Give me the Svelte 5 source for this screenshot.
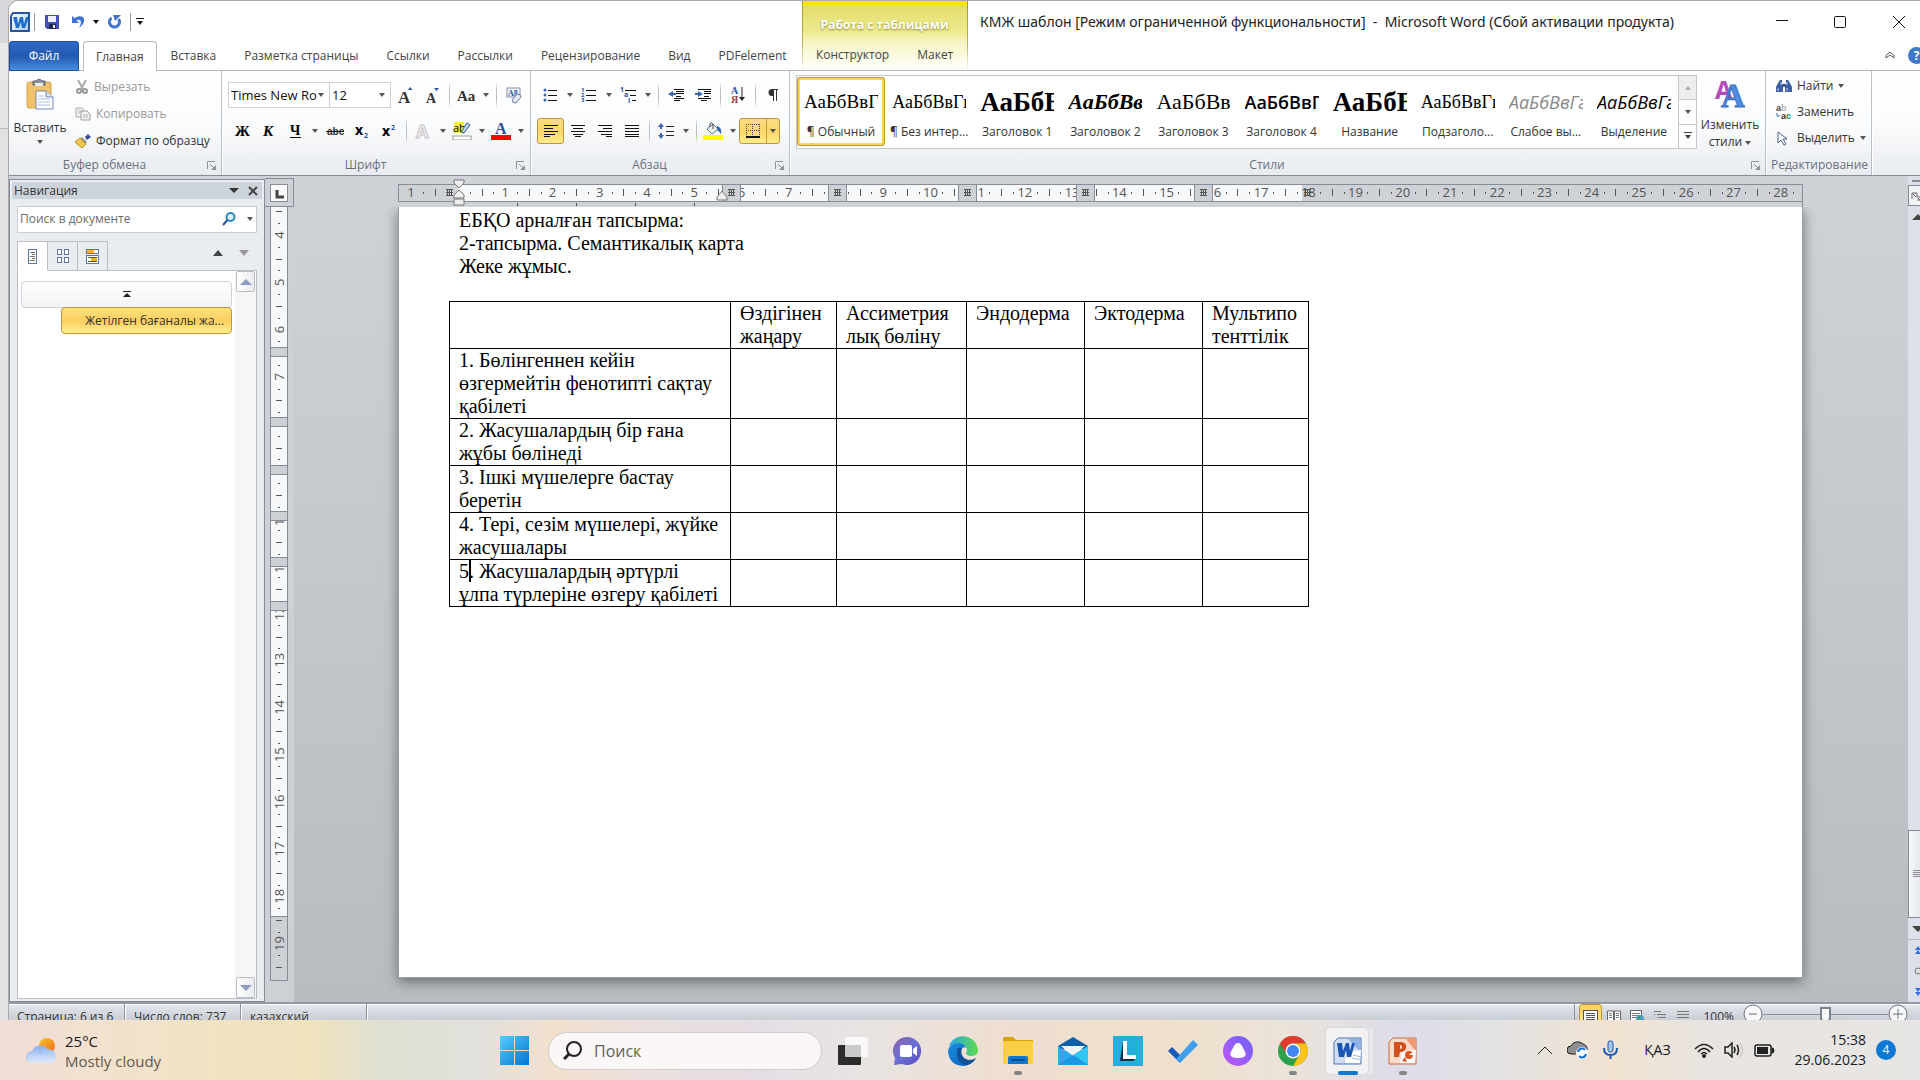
<script>
  let fontName = $state("Times New Ro");
  let fontSize = $state("12");
  let zoom = $state(50);
  let navQuery = $state("");
  let taskQuery = $state("");
  let activeTab = $state("Главная");
  let activeStyle = $state("¶ Обычный");

  const tabs = ["Главная", "Вставка", "Разметка страницы", "Ссылки", "Рассылки", "Рецензирование", "Вид", "PDFelement"];

  const styles = [
    { name: "¶ Обычный", sample: "АаБбВвГг", look: "times" },
    { name: "¶ Без интер...", sample: "АаБбВвГгД", look: "cambria" },
    { name: "Заголовок 1", sample: "АаБбВ", look: "large" },
    { name: "Заголовок 2", sample: "АаБбВвГ", look: "bold-italic" },
    { name: "Заголовок 3", sample: "АаБбВвГ", look: "semi" },
    { name: "Заголовок 4", sample: "АаБбВвГ", look: "sans-bold" },
    { name: "Название", sample: "АаБбВ", look: "large" },
    { name: "Подзаголо...", sample: "АаБбВвГг", look: "cambria" },
    { name: "Слабое вы...", sample: "АаБбВвГг", look: "faint" },
    { name: "Выделение", sample: "АаБбВвГг", look: "sans-italic" }
  ];

  const columns = ["", "Өздігінен жаңару", "Ассиметрия лық бөліну", "Эндодерма", "Эктодерма", "Мультипо тенттілік"];
  const rows = [
    "1. Бөлінгеннен кейін өзгермейтін фенотипті сақтау қабілеті",
    "2. Жасушалардың бір ғана жұбы бөлінеді",
    "3. Ішкі мүшелерге бастау беретін",
    "4. Тері, сезім мүшелері, жүйке жасушалары"
  ];

  // one centimetre at 120 dpi
  const CM = 47.24;

  function marks(from, to, origin) {
    let out = [];
    for (let n = from; n <= to; n++) {
      let at = origin + n * CM;
      out.push({ kind: "num", n, at });
      out.push({ kind: "dot", at: at + CM * 0.25 });
      out.push({ kind: "tick", at: at + CM * 0.5 });
      out.push({ kind: "dot", at: at + CM * 0.75 });
    }
    return out;
  }

  const hMarks = [
    { kind: "num", n: 1, at: 13 },
    { kind: "dot", at: 25 }, { kind: "tick", at: 37 },
    ...marks(0, 28, 60).filter((m) => m.at > 61 && m.at < 1402)
  ];
  const hStops = [324, 430, 560, 678, 796];
  const vMarks = marks(3, 19, 28 - 4 * CM).filter((m) => m.at > 2 && m.at < 770);
  const vStops = [140, 210, 258, 304, 350, 394];

  const apps = [
    { icon: "taskview", title: "Представление задач" },
    { icon: "chat", title: "Чат" },
    { icon: "edge", title: "Edge" },
    { icon: "folder", title: "Проводник", state: "open" },
    { icon: "mail", title: "Почта" },
    { icon: "letter", title: "L" },
    { icon: "todo", title: "To Do" },
    { icon: "alice", title: "Алиса" },
    { icon: "chrome", title: "Chrome", state: "open" },
    { icon: "wordapp", title: "Word", state: "active" },
    { icon: "pptapp", title: "PowerPoint", state: "open" }
  ];

  function lines(list, color = "#111") {
    return list.map(([x, y, w]) => `<rect x="${x}" y="${y}" width="${w}" height="2" fill="${color}"/>`).join("");
  }

  function glyph(text, x, y, size, extra = "") {
    return `<text x="${x}" y="${y}" font-size="${size}" font-family="Liberation Serif, serif" font-weight="700" ${extra}>${text}</text>`;
  }

  const icons = {
    word: [20, 20, `<defs><linearGradient id="wg" x2="1" y2="1"><stop stop-color="#fff"/><stop offset="1" stop-color="#a9cbee"/></linearGradient></defs><path d="M3 1H19V19H1V4Z" fill="url(#wg)" stroke="#2a5699" stroke-width="2"/><path d="M3 5H7L8 12 10 5H13L14 12 16 5H19L15 16H12L10.500 10 9 16H6Z" fill="#1c6fd0"/>`],
    save: [14, 14, `<path d="M0 0H14V14H2L0 12Z" fill="#4450b8"/><rect x="3" y="1" width="8" height="6" fill="#eef1fb"/><rect x="4" y="9" width="7" height="5" fill="#20264f"/><rect x="8" y="10" width="2" height="3" fill="#fff"/>`],
    undo: [13, 14, `<path d="M0 1V8H7L4.500 5.500C8 3 11 6 7 13 15 7 13 0 6 1.500L2.500 3Z" fill="#3f75cf"/>`],
    redo: [13, 14, `<path d="M3.500 3A5 5 0 1 0 10.500 4" fill="none" stroke="#3f75cf" stroke-width="3"/><path d="M5 0H13L7 6Z" fill="#3f75cf"/>`],
    paste: [28, 31, `<rect x="1" y="3" width="24" height="26" rx="2" fill="#efc36b" stroke="#d6a34a"/><path d="M7 2H10Q13 -2 16 2H19V6H7Z" fill="#8d9299" stroke="#5d6269"/><rect x="9" y="4" width="8" height="3" fill="#e7e9ec"/><path d="M10 12H20L27 18V30H10Z" fill="#fff" stroke="#6f87b3"/><path d="M20 12V18H27" fill="#dbe5f5" stroke="#6f87b3"/><path d="M12 17H18M12 20H24M12 23H24M12 26H24" stroke="#a9bddb"/>`],
    cut: [14, 14, `<path d="M3 0 8 9M11 0 6 9" stroke="#a8a8a8" stroke-width="2"/><circle cx="4" cy="11" r="2" fill="none" stroke="#999" stroke-width="2"/><circle cx="10" cy="11" r="2" fill="none" stroke="#999" stroke-width="2"/>`],
    copy: [16, 14, `<path d="M1 1H7L9 3V10H1Z" fill="#f2f2f2" stroke="#a9a9a9"/><path d="M6 4H12L15 7V13H6Z" fill="#f2f2f2" stroke="#9d9d9d"/><path d="M3 4H6M3 6H5M8 8H13M8 10H13" stroke="#b5b5b5"/>`],
    brush: [16, 14, `<path d="M10 3 13 0 16 3 12 6Z" fill="#3b4a8c"/><path d="M7 3 12 8 10 10 5 5Z" fill="#8e93a0"/><path d="M5 4 11 10 7 14Q3 11 0 8Z" fill="#efc94c" stroke="#b48a1c"/>`],
    grow: [16, 18, glyph("A", 1, 17, 17, 'fill="#333"') + `<path d="M11 4 13 1 15.500 4Z" fill="#2a50a0"/>`],
    shrink: [16, 18, glyph("A", 2, 17, 14, 'fill="#333"') + `<path d="M10 2 12.500 5 15 2Z" fill="#2a50a0"/>`],
    caseAa: [20, 16, glyph("Aa", 1, 14, 15, 'fill="#333"')],
    clear: [16, 17, `<rect x="1" y="1" width="13" height="9" fill="#f4f6fa" stroke="#8190ac"/>` + glyph("A8", 2, 9, 8, 'fill="#2a50a0"') + `<path d="M6 13 11 7Q15 7 15 10L10 16Q6 16 6 13Z" fill="#e5ecf8" stroke="#6a7aa0"/>`],
    bold: [16, 16, glyph("Ж", 1, 13, 15)],
    italic: [16, 16, glyph("К", 2, 13, 15, 'font-style="italic"')],
    under: [16, 16, glyph("Ч", 3, 12, 14) + `<path d="M3 14.500H14" stroke="#111"/>`],
    strike: [18, 16, `<text x="1" y="12" font-size="10" font-weight="700" font-family="Liberation Sans, sans-serif" fill="#333">abc</text><path d="M0 8.500H18" stroke="#111"/>`],
    sub: [16, 16, `<text x="1" y="12" font-size="14" font-weight="700" font-family="Open Sans, sans-serif">x</text><text x="10" y="15" font-size="7" font-weight="700" font-family="Open Sans, sans-serif" fill="#2a50a0">2</text>`],
    sup: [16, 16, `<text x="1" y="13" font-size="14" font-weight="700" font-family="Open Sans, sans-serif">x</text><text x="10" y="7" font-size="7" font-weight="700" font-family="Open Sans, sans-serif" fill="#2a50a0">2</text>`],
    effects: [18, 18, `<text x="2" y="16" font-size="18" font-weight="700" font-family="Open Sans, sans-serif" fill="#f3f1f4" stroke="#c5c1c8">A</text>`],
    marker: [20, 18, `<rect x="2" y="0" width="10" height="11" fill="#f4ee3c"/><text x="1" y="10" font-size="11" font-family="Open Sans, sans-serif">ab</text><path d="M9 10 15 1 18 3 12 11Z" fill="#b8d4f4" stroke="#3a5c94"/><rect x="1" y="14" width="18" height="4" fill="#fff" stroke="#999"/>`],
    color: [20, 18, glyph("A", 4, 12, 16, 'fill="#2a4f9c"') + `<rect y="13" width="20" height="5" fill="#f00"/>`],
    bullets: [14, 14, `<circle cx="2" cy="2" r="1.500" fill="#3a66b8"/><circle cx="2" cy="7" r="1.500" fill="#3a66b8"/><circle cx="2" cy="12" r="1.500" fill="#3a66b8"/><path d="M5 2.500H14M5 7.500H14M5 12.500H14" stroke="#111"/>`],
    numbers: [16, 16, `<g font-size="6" font-weight="700" font-family="Open Sans, sans-serif" fill="#2a50a0"><text y="5">1</text><text y="10">2</text><text y="15">3</text></g><path d="M5 3.500H15M5 8.500H15M5 13.500H15" stroke="#111"/>`],
    multi: [17, 16, `<g font-size="7" font-weight="700" font-family="Open Sans, sans-serif" fill="#2a50a0"><text y="5">1</text><text x="4" y="10">a</text><text x="8" y="16">i</text></g><path d="M5 3.500H16M10 8.500H16M12 13.500H16" stroke="#111"/>`],
    outdent: [16, 14, `<path d="M6 1.500H16M8 3.500H16M8 5.500H16M8 8.500H13M6 10.500H16M6 12.500H12" stroke="#111"/><path d="M5 3V9L0 6Z" fill="#3a66b8"/><path d="M3 6H8" stroke="#3a66b8" stroke-width="2"/>`],
    indent: [16, 14, `<path d="M3 1.500H16M9 3.500H16M9 5.500H16M9 8.500H14M3 10.500H16M6 12.500H12" stroke="#111"/><path d="M3 3V9L8 6Z" fill="#3a66b8"/><path d="M0 6H4" stroke="#3a66b8" stroke-width="2"/>`],
    sort: [15, 18, `<g font-size="10" font-weight="700" font-family="Liberation Serif, serif"><text x="1" y="8" fill="#2a50a0">А</text><text x="1" y="17" fill="#a23a34">Я</text></g><path d="M12 1V14" stroke="#222" stroke-width="1"/><path d="M9 11H15L12 15Z" fill="#222"/>`],
    pilcrow: [12, 14, `<path d="M11 1H5A3.500 3.500 0 0 0 5 8H6V13H7V2H9V13H10V2H11Z" fill="#333"/>`],
    left: [14, 14, `<path d="M0 1.500H14M0 4.500H9M0 7.500H14M0 10.500H11M0 12.500H6" stroke="#111"/>`],
    center: [14, 14, `<path d="M0 1.500H14M2 4.500H12M0 7.500H14M2 10.500H12M4 12.500H10" stroke="#111"/>`],
    right: [14, 14, `<path d="M0 1.500H14M5 4.500H14M0 7.500H14M3 10.500H14M8 12.500H14" stroke="#111"/>`],
    justify: [14, 14, `<path d="M0 1.500H14M0 4.500H14M0 7.500H14M0 10.500H14M0 12.500H14" stroke="#111"/>`],
    spacing: [16, 16, `<path d="M3 0 6 4H0ZM3 16 0 12H6Z" fill="#3a66b8"/><path d="M3 3V6M3 10V13" stroke="#3a66b8" stroke-width="2"/><path d="M8 3.500H16M8 8.500H16M8 12.500H16" stroke="#222"/>`],
    bucket: [20, 18, `<path d="M4 7 10 2 15 7 9 12Z" fill="#eef3fb" stroke="#55709c"/><path d="M7 5V2Q9 -1 10 3V7" fill="none" stroke="#444"/><path d="M14 4Q19 5 18 12 16 9 14 8Z" fill="#2e63b5"/><rect y="13" width="20" height="5" fill="#ff0"/>`],
    borders: [14, 14, `<path d="M0 .5H14M0 6.500H14M.5 0V12M6.500 0V12M13.500 0V12" stroke="#444" stroke-dasharray="1 1"/><path d="M0 13H14" stroke="#111" stroke-width="2"/>`],
    changeStyles: [30, 30, `<text x="0" y="20" font-size="25" font-weight="700" font-family="Open Sans, sans-serif" fill="#b04cb8">A</text>` + glyph("A", 6, 28, 33, 'fill="#4f8ce0" stroke="#3a6fc0"')],
    find: [16, 14, `<path d="M2 4 4 1H6V5H10V1H12L14 4 16 8V13H9V8H7V13H0V8Z" fill="#3a5fa8"/><path d="M2 9V12M11 9V12M5 3V6M11 3V6" stroke="#c7d8f5"/>`],
    replace: [16, 16, `<g font-size="9" font-weight="700" font-family="Liberation Sans, sans-serif"><text y="7" fill="#444">a</text><text x="5" y="7" fill="#b5b5b5">b</text><text x="5" y="15" fill="#333">a</text><text x="10" y="15" fill="#1c8a34">c</text></g><path d="M1 9V12H4" fill="none" stroke="#3a66b8"/>`],
    select: [12, 15, `<path d="M2 1V12L5 9 8 14 10 13 7 8H11Z" fill="#fff" stroke="#4a6288"/>`],
    launcher: [9, 9, `<path d="M.5 8V.5H8" fill="none" stroke="#8c929b"/><path d="M9 4V9H4Z" fill="#8c929b"/><path d="M3 3 7 7" stroke="#8c929b"/>`],
    lens: [14, 14, `<circle cx="8.500" cy="5" r="4" fill="#dff2fb" stroke="#2f86c0" stroke-width="2"/><path d="M5.500 8 1 13" stroke="#2b4f9e" stroke-width="2"/>`],
    navDoc: [9, 15, `<rect x=".5" y=".5" width="8" height="14" fill="#fff" stroke="#5c76a8"/><path d="M2 3.500H7M4 5.500H7M2 7.500H7M4 9.500H7M2 11.500H7" stroke="#777"/>`],
    navPages: [12, 14, `<g fill="#fff" stroke="#5c76a8"><rect x=".5" y=".5" width="4" height="5"/><rect x="7.500" y=".5" width="4" height="5"/><rect x=".5" y="8.500" width="4" height="5"/><rect x="7.500" y="8.500" width="4" height="5"/></g>`],
    navFound: [13, 15, `<rect x=".5" y=".5" width="12" height="4" fill="#fff" stroke="#5c76a8"/><rect x=".5" y="6.500" width="12" height="8" fill="#fff" stroke="#5c76a8"/><rect x="1" y="1" width="7" height="3" fill="#f3b02c"/><path d="M2 8.500H11M2 12.500H11" stroke="#555"/><rect x="5" y="9" width="6" height="3" fill="#f3b02c"/>`],
    vPrint: [15, 13, `<rect x=".5" y=".5" width="14" height="13" fill="#fff" stroke="#555"/><path d="M3 3.500H12M3 5.500H12M3 7.500H12M3 9.500H12" stroke="#555"/>`],
    vRead: [14, 13, `<path d="M.5 1H6.500V11H.5ZM7.500 1H13.500V11H7.500Z" fill="#fff" stroke="#666"/><path d="M2 3.500H5M2 5.500H5M2 7.500H5M9 3.500H12M9 5.500H12M9 7.500H12" stroke="#777"/>`],
    vWeb: [14, 13, `<rect x=".5" y=".5" width="11" height="12" fill="#fff" stroke="#666"/><path d="M2 3.500H10M2 5.500H10M2 7.500H8" stroke="#777"/><circle cx="10" cy="9" r="4" fill="#4d9dc9"/><path d="M8 7Q11 8 9 12" stroke="#4da35c" stroke-width="2" fill="none"/>`],
    vOutline: [12, 13, `<path d="M0 1.500H7M3 4.500H12M5 7.500H12M3 10.500H12" stroke="#777"/><path d="M0 4.500H1M3 7.500H4" stroke="#777"/>`],
    vDraft: [12, 13, `<path d="M0 1.500H12M0 4.500H12M0 7.500H12M0 10.500H12" stroke="#777"/>`],
    weather: [30, 26, `<defs><linearGradient id="sun" x2="1" y2="1"><stop stop-color="#f9c22e"/><stop offset="1" stop-color="#ee6a1a"/></linearGradient><linearGradient id="cl" y2="1" x2="0"><stop stop-color="#8fb1ec"/><stop offset="1" stop-color="#c3d9f8"/></linearGradient><linearGradient id="cf" y2="1" x2="0"><stop stop-color="#a3c0f1"/><stop offset="1" stop-color="#dce9fb"/></linearGradient></defs><circle cx="21" cy="8" r="8" fill="url(#sun)"/><path d="M6 25A6 6 0 0 1 6 13 9 9 0 0 1 22 12 7 7 0 0 1 24 25Z" fill="url(#cl)"/><path d="M5 25A6 6 0 0 1 5 14Q10 11 15 17 19 9 26 12 30 15 30 19 29 25 24 25Z" fill="url(#cf)"/>`],
    start: [30, 30, `<defs><linearGradient id="st" x2="1" y2="1"><stop stop-color="#4fd0fa"/><stop offset="1" stop-color="#0573cf"/></linearGradient></defs><path d="M0 0H14V14H0ZM15 0H29V14H15ZM0 15H14V29H0ZM15 15H29V29H15Z" fill="url(#st)"/>`],
    searchBig: [19, 19, `<circle cx="11" cy="8" r="7" fill="none" stroke="#222" stroke-width="2"/><path d="M6 13 1 18" stroke="#222" stroke-width="3"/>`],
    taskview: [30, 28, `<rect y="8" width="23" height="20" rx="1" fill="#2c2c2a"/><rect x="7" width="23" height="20" rx="1" fill="#fff" opacity=".75"/>`],
    chat: [30, 30, `<defs><linearGradient id="ch" x2="1" y2="1"><stop stop-color="#8c62a8"/><stop offset=".5" stop-color="#6b6fd6"/><stop offset="1" stop-color="#5a4bc4"/></linearGradient></defs><path d="M15 1A14 14 0 1 1 9 28L1 29 2 22A14 14 0 0 1 15 1Z" fill="url(#ch)"/><rect x="7" y="9" width="12" height="12" rx="2" fill="#fff"/><path d="M20 13 24 10V20L20 17Z" fill="#fff"/>`],
    edge: [30, 30, `<defs><linearGradient id="e1" x2="1"><stop stop-color="#27a5e8"/><stop offset="1" stop-color="#5fdc4c"/></linearGradient><linearGradient id="e2" x2="1" y2="1"><stop stop-color="#1b8fe2"/><stop offset="1" stop-color="#0b5cb4"/></linearGradient></defs><path d="M1 10A15 15 0 0 1 30 14Q30 20 23 20 18 20 18 17 20 14 18 11 10 5 1 10Z" fill="url(#e1)"/><path d="M0 15Q1 8 9 7 16 7 18 12 15 10 13 14 11 21 18 24 24 26 28 22 23 30 15 30 1 29 0 15Z" fill="url(#e2)"/><path d="M9 15Q8 25 17 29 25 28 28 22 22 26 16 22 12 18 14 12 9 11 9 15Z" fill="#124f96"/>`],
    folder: [30, 27, `<path d="M0 2Q0 0 2 0H10L13 3H30V12H0Z" fill="#dca103"/><rect y="4" width="30" height="23" rx="1" fill="#fbcf45"/><path d="M5 27V21Q5 19 7 19H23Q25 19 25 21V27Z" fill="#0f79cf"/><path d="M8 23H22" stroke="#0b4f8c" stroke-width="2"/>`],
    mail: [30, 28, `<path d="M0 9 15 0 30 9V12H0Z" fill="#0f5ea8"/><path d="M0 9V28H30V9L15 18Z" fill="#2aa9ec"/><path d="M3 9H27L15 19Z" fill="#f2f2f2"/><path d="M15 18 30 9V28Z" fill="#31c6f4"/><path d="M0 28 15 18 30 28Z" fill="#1f98e4"/>`],
    letter: [30, 30, `<rect width="30" height="30" fill="#25afdb"/><path d="M10 5 7 25H21L22 22H12Z" fill="#08304e"/><path d="M10 5H14V19H23V23H10Z" fill="#fff"/>`],
    todo: [30, 26, `<path d="M0 13 4 9 12 17 12 25Z" fill="#185abd"/><path d="M12 25 8 21 25 2 30 7Z" fill="#3ea0ec"/>`],
    alice: [30, 30, `<defs><linearGradient id="al" x2="1" y1="1" y2="0"><stop stop-color="#c356f8"/><stop offset="1" stop-color="#6a63fb"/></linearGradient></defs><circle cx="15" cy="15" r="15" fill="url(#al)"/><path d="M15 7Q18 7 20 12 24 18 22 20 20 22 15 22 10 22 8 20 6 18 10 12 12 7 15 7Z" fill="#fff"/>`],
    chrome: [30, 30, `<circle cx="15" cy="15" r="15" fill="#2da14c"/><path d="M2 7.500A15 15 0 0 1 28 7.500H15A7.500 7.500 0 0 0 8.500 18.700Z" fill="#e33b2e"/><path d="M28 7.500A15 15 0 0 1 15 30L21.500 18.700A7.500 7.500 0 0 0 15 7.500Z" fill="#fcc31e"/><circle cx="15" cy="15" r="7.500" fill="#fff"/><circle cx="15" cy="15" r="6" fill="#4285f4"/>`],
    wordapp: [30, 30, `<path d="M5 2H28V28H1V6Z" fill="#cfe0f6" stroke="#4d74b0"/><path d="M15 3H27V16Z" fill="#8fb5e6"/><path d="M14 16 28 14 27 27H12Z" fill="#fff"/><path d="M4 7H9L10 15 13 7H16L17 15 19 7H22L18 21H14L13 14 11 21H6Z" fill="#1c56b4"/><path d="M20 19 28 21M19 22 28 24" stroke="#9bb4d8"/>`],
    pptapp: [30, 30, `<path d="M5 2H28V28H1V6Z" fill="#fbdcca" stroke="#c96a3d"/><path d="M18 3H27V14Z" fill="#f29a6d"/><path d="M14 16 28 14 27 27H12Z" fill="#fff"/><path d="M6 6H13Q19 6 18 12 17 16 12 16L11 21H6ZM12 9V13Q14 13 14 11 14 9 12 9Z" fill="#d4501c" fill-rule="evenodd"/><circle cx="21" cy="19" r="4" fill="#e0562a"/><path d="M21 19 25 16 25 19Z" fill="#fff"/><path d="M14 25 17 21 19 26Z" fill="#e0562a"/>`],
    up: [16, 10, `<path d="M1 9 8 2 15 9" fill="none" stroke="#222" stroke-width="1"/>`],
    cloud: [22, 20, `<path d="M4 14A4 4 0 0 1 4 6 7 6 0 0 1 16 4 5 5 0 0 1 19 12L13 14Z" fill="#8f8f8f" stroke="#222" stroke-width="1"/><circle cx="15" cy="13" r="6" fill="#fff"/><path d="M11 12A4 4 0 0 1 18 10M19 14A4 4 0 0 1 12 16" fill="none" stroke="#1272ce" stroke-width="2"/>`],
    mic: [15, 20, `<rect x="5" y="1" width="5" height="11" rx="2" fill="#a8c3ea" stroke="#1f5cb0"/><path d="M1 8Q1 15 7.500 15 14 15 14 8M7.500 15V19" fill="none" stroke="#1f5cb0" stroke-width="2"/>`],
    wifi: [20, 15, `<g fill="none" stroke="#222" stroke-width="1.500"><path d="M1 6Q10 -3 19 6M4 9Q10 2 16 9M7 11Q10 8 13 11"/></g><circle cx="10" cy="13" r="2" fill="#222"/>`],
    sound: [20, 16, `<path d="M1 5H4L8 1V15L4 11H1Z" fill="none" stroke="#222" stroke-width="1.500"/><path d="M10 5Q12 8 10 11M13 3Q16 8 13 13" fill="none" stroke="#222" stroke-width="1.500"/><path d="M16 1Q21 8 16 15" fill="none" stroke="#bbb"/>`],
    battery: [21, 13, `<rect x="1" y="1" width="16" height="11" rx="2" fill="none" stroke="#222" stroke-width="1.500"/><rect x="3" y="3" width="11" height="7" fill="#222"/><path d="M18 4H19L20 6.500 19 9H18Z" fill="#222" stroke="#222"/>`]
  };
</script>

{#snippet icon(name)}
  <svg width={icons[name][0]} height={icons[name][1]} aria-hidden="true">{@html icons[name][2]}</svg>
{/snippet}

{#snippet caret()}
  <svg class="caret" width="6" height="4" aria-hidden="true"><path d="M0 0H6L3 4Z" /></svg>
{/snippet}

{#snippet tool(name, title)}
  <button class="tool" aria-label={title}>{@render icon(name)}</button>
{/snippet}

{#snippet split(name, title, on)}
  <span class="split" class:on>
    <button class="main" aria-label={title}>{@render icon(name)}</button>
    <button class="drop" aria-label="{title}: меню">{@render caret()}</button>
  </span>
{/snippet}

{#snippet footer(label, launch)}
  <div class="group-label" class:launchable={launch}>
    <span>{label}</span>
    {#if launch}<button class="launch" aria-label="{label}: окно">{@render icon("launcher")}</button>{/if}
  </div>
{/snippet}

<div class="desktop">
  <div class="screen">
    <div class="behind"></div>
    <div class="window">
      <header class="titlebar">
        <div class="quick">
          {@render icon("word")}
          <i class="bar"></i>
          <button aria-label="Сохранить">{@render icon("save")}</button>
          <button aria-label="Отменить">{@render icon("undo")}</button>
          <button class="mini" aria-label="Отменить: меню">{@render caret()}</button>
          <button aria-label="Повторить">{@render icon("redo")}</button>
          <i class="bar"></i>
          <button class="mini" aria-label="Настройка панели">
            <svg width="8" height="8"><path d="M0 .5H8" stroke="#111" /><path d="M1 3H7L4 7Z" fill="#111" /></svg>
          </button>
        </div>
        <h1>КМЖ шаблон [Режим ограниченной функциональности]&nbsp; -&nbsp; Microsoft Word (Сбой активации продукта)</h1>
        <div class="controls">
          <button aria-label="Свернуть"><svg width="14" height="14"><path d="M1 5.500H13" /></svg></button>
          <button aria-label="Развернуть"><svg width="14" height="14"><rect x="1.500" y="1.500" width="11" height="11" rx="1" /></svg></button>
          <button aria-label="Закрыть"><svg width="14" height="14"><path d="M1 1 13 13M13 1 1 13" /></svg></button>
        </div>
      </header>

      <nav class="tabs">
        <button class="file">Файл</button>
        {#each tabs as tab}
          <button class="tab" class:active={tab === activeTab} onclick={() => (activeTab = tab)}>{tab}</button>
        {/each}
        <div class="context">
          <strong>Работа с таблицами</strong>
          <div class="context-tabs">
            <button class="tab">Конструктор</button>
            <button class="tab">Макет</button>
          </div>
        </div>
        <div class="help">
          <button aria-label="Свернуть ленту"><svg width="10" height="9"><path d="M1 4.500 5 1 9 4.500V7L5 4 1 7Z" fill="#fff" stroke="#555" /></svg></button>
          <button class="question" aria-label="Справка">?</button>
        </div>
      </nav>

      <div class="ribbon">
        <section class="group clipboard">
          <div class="body">
            <button class="big">{@render icon("paste")}<span>Вставить</span>{@render caret()}</button>
            <div class="stack">
              <button disabled>{@render icon("cut")}Вырезать</button>
              <button disabled>{@render icon("copy")}Копировать</button>
              <button>{@render icon("brush")}Формат по образцу</button>
            </div>
          </div>
          {@render footer("Буфер обмена", true)}
        </section>

        <section class="group font">
          <div class="rows">
            <div class="row">
              <span class="combo face">
                <select bind:value={fontName} aria-label="Шрифт"><option>Times New Ro</option></select>{@render caret()}
              </span>
              <span class="combo size">
                <select bind:value={fontSize} aria-label="Размер шрифта"><option>12</option></select>{@render caret()}
              </span>
              {@render tool("grow", "Увеличить размер")}
              {@render tool("shrink", "Уменьшить размер")}
              <i class="sep"></i>
              {@render split("caseAa", "Регистр")}
              <i class="sep"></i>
              {@render tool("clear", "Очистить формат")}
            </div>
            <div class="row">
              {@render tool("bold", "Полужирный")}
              {@render tool("italic", "Курсив")}
              {@render split("under", "Подчеркнутый")}
              {@render tool("strike", "Зачеркнутый")}
              {@render tool("sub", "Подстрочный знак")}
              {@render tool("sup", "Надстрочный знак")}
              <i class="sep"></i>
              {@render split("effects", "Текстовые эффекты")}
              {@render split("marker", "Цвет выделения")}
              {@render split("color", "Цвет текста")}
            </div>
          </div>
          {@render footer("Шрифт", true)}
        </section>

        <section class="group para">
          <div class="rows">
            <div class="row">
              {@render split("bullets", "Маркеры")}
              {@render split("numbers", "Нумерация")}
              {@render split("multi", "Многоуровневый список")}
              <i class="sep"></i>
              {@render tool("outdent", "Уменьшить отступ")}
              {@render tool("indent", "Увеличить отступ")}
              <i class="sep"></i>
              {@render tool("sort", "Сортировка")}
              <i class="sep"></i>
              {@render tool("pilcrow", "Все знаки")}
            </div>
            <div class="row">
              <button class="tool on" aria-label="По левому краю">{@render icon("left")}</button>
              {@render tool("center", "По центру")}
              {@render tool("right", "По правому краю")}
              {@render tool("justify", "По ширине")}
              <i class="sep"></i>
              {@render split("spacing", "Интервал")}
              <i class="sep"></i>
              {@render split("bucket", "Заливка")}
              {@render split("borders", "Границы", true)}
            </div>
          </div>
          {@render footer("Абзац", true)}
        </section>

        <section class="group styles">
          <div class="body">
            <div class="gallery">
              {#each styles as s}
                <button class="style" class:on={s.name === activeStyle} onclick={() => (activeStyle = s.name)}>
                  <span class="sample {s.look}">{s.sample}</span>
                  <span class="name">{s.name}</span>
                </button>
              {/each}
            </div>
            <div class="scroller">
              <button disabled aria-label="Вверх"><svg width="6" height="4"><path d="M0 4H6L3 0Z" fill="#aaa" /></svg></button>
              <button aria-label="Вниз">{@render caret()}</button>
              <button aria-label="Все стили"><svg width="8" height="8"><path d="M0 .5H8" stroke="#444" /><path d="M1 3H7L4 7Z" fill="#444" /></svg></button>
            </div>
            <button class="big change">{@render icon("changeStyles")}<span>Изменить<br />стили {@render caret()}</span></button>
          </div>
          {@render footer("Стили", true)}
        </section>

        <section class="group editing">
          <div class="stack">
            <button>{@render icon("find")}Найти {@render caret()}</button>
            <button>{@render icon("replace")}Заменить</button>
            <button>{@render icon("select")}Выделить {@render caret()}</button>
          </div>
          {@render footer("Редактирование", false)}
        </section>
      </div>

      <main class="workspace">
        <aside class="nav">
          <header>
            <h2>Навигация</h2>
            <button aria-label="Параметры"><svg width="10" height="6"><path d="M0 0H10L5 5Z" fill="#333" /></svg></button>
            <button aria-label="Закрыть панель"><svg width="10" height="10"><path d="M1 1 9 9M9 1 1 9" stroke="#444" stroke-width="2" /></svg></button>
          </header>
          <div class="find">
            <input type="text" bind:value={navQuery} placeholder="Поиск в документе" aria-label="Поиск в документе" />
            <button aria-label="Найти">{@render icon("lens")}</button>
            <button aria-label="Параметры поиска">{@render caret()}</button>
          </div>
          <div class="nav-tabs">
            <button class="on" aria-label="Заголовки">{@render icon("navDoc")}</button>
            <button aria-label="Страницы">{@render icon("navPages")}</button>
            <button aria-label="Результаты">{@render icon("navFound")}</button>
            <div class="nav-steps">
              <button aria-label="Предыдущий"><svg width="10" height="6"><path d="M0 6H10L5 0Z" fill="#444" /></svg></button>
              <button aria-label="Следующий"><svg width="10" height="6"><path d="M0 0H10L5 6Z" fill="#999" /></svg></button>
            </div>
          </div>
          <div class="outline">
            <div class="items">
              <button class="top" aria-label="К началу"><svg width="8" height="7"><path d="M0 .5H8" stroke="#222" /><path d="M0 6H8L4 2Z" fill="#222" /></svg></button>
              <button class="heading">Жетілген бағаналы жа...</button>
            </div>
            <div class="track">
              <button aria-label="Вверх"><svg width="12" height="6"><path d="M0 6H12L6 0Z" fill="#8d9bc4" /></svg></button>
              <button aria-label="Вниз"><svg width="12" height="6"><path d="M0 0H12L6 6Z" fill="#8d9bc4" /></svg></button>
            </div>
          </div>
        </aside>

        <div class="v-side">
          <button class="corner" aria-label="Табуляция"><svg width="18" height="18"><path d="M6 5V12H13" fill="none" stroke="#444" stroke-width="3" /></svg></button>
          <svg class="v-ruler" width="18" height="774">
            <rect x="0" y="0" width="18" height="774" fill="#cdd0d5" />
            <rect x="0" y="0" width="18" height="709" fill="#f7f8f9" />
            {#each vMarks as m}
              {#if m.kind === "num"}
                <text x="9" y={m.at} transform="rotate(-90 9 {m.at})" dy="5">{m.n}</text>
              {:else if m.kind === "tick"}
                <path d="M6 {Math.round(m.at)}.5H12" />
              {:else}
                <path d="M8 {Math.round(m.at)}.5H10" />
              {/if}
            {/each}
            {#each vStops as y}
              <rect class="stop" x="0.5" y={y + 0.5} width="17" height="9" />
            {/each}
            <path class="edge" d="M.5 0V773.500H17.500V0M0 709.500H18" />
          </svg>
        </div>

        <div class="doc">
          <svg class="h-ruler" width="100%" height="23">
            <rect x="60" y="0" width="850" height="17" fill="#f7f8f9" />
            <rect x="904" y="0" width="13" height="17" fill="#cdd0d5" />
            {#each hMarks as m}
              {#if m.kind === "num"}
                <text x={m.at} y="13">{m.n}</text>
              {:else if m.kind === "tick"}
                <path d="M{Math.round(m.at)}.5 5V12" />
              {:else if m.kind === "dot"}
                <path d="M{Math.round(m.at)}.5 8V10" />
              {/if}
            {/each}
            {#each hStops as x}
              <rect class="stop" x={x + 0.5} y="0.5" width="18" height="17" />
              <path d="M{x + 6} 5.500H{x + 13}M{x + 6} 8.500H{x + 13}M{x + 6} 11.500H{x + 13}M{x + 7}.5 5V12M{x + 9}.5 5V12M{x + 11}.5 5V12" />
            {/each}
            <path d="M48 5.500H55M48 8.500H55M48 11.500H55M49.500 5V12M51.500 5V12M53.500 5V12" />
            <path d="M906 5.500H913M906 8.500H913M906 11.500H913M907.500 5V12M909.500 5V12M911.500 5V12" />
            <rect class="frame" x="0.5" y="0.5" width="100%" height="17" />
            <path d="M119.500 19V22M178.500 19V22M237.500 19V22M296.500 19V22" />
          </svg>
          <svg class="indent" width="12" height="28"><path d="M1 1H11V4L6 9 1 4ZM6 11 11 16V19H1V16ZM1 20H11V26H1Z" /></svg>
          <svg class="indent end" width="12" height="12"><path d="M6 1 11 7V10H1V7Z" /></svg>

          <article class="page">
            <p>ЕБҚО арналған тапсырма:</p>
            <p>2-тапсырма. Семантикалық карта</p>
            <p>Жеке жұмыс.</p>
            <p>&nbsp;</p>
            <table>
              <colgroup><col class="c1" /><col class="c2" /><col class="c3" /><col class="c4" /><col class="c4" /><col class="c2" /></colgroup>
              <thead>
                <tr>{#each columns as c}<th scope="col">{c}</th>{/each}</tr>
              </thead>
              <tbody>
                {#each rows as r}
                  <tr><td>{r}</td><td></td><td></td><td></td><td></td><td></td></tr>
                {/each}
                <tr><td>5<span class="cursor"></span>. Жасушалардың әртүрлі ұлпа түрлеріне өзгеру қабілеті</td><td></td><td></td><td></td><td></td><td></td></tr>
              </tbody>
            </table>
          </article>
        </div>

        <div class="v-scroll">
          <span class="grip"></span>
          <button class="rule" aria-label="Линейка"><svg width="14" height="10"><path d="M1 8V2H6V6H13V9H6M2 3 5 6M7 7 9 9" fill="none" stroke="#666" /></svg></button>
          <button aria-label="Вверх"><svg width="12" height="6"><path d="M0 6H12L6 0Z" fill="#444" /></svg></button>
          <div class="thumb"><svg width="10" height="8"><path d="M0 .5H10M0 2.500H10M0 4.500H10M0 6.500H10" stroke="#889" /></svg></div>
          <button aria-label="Вниз"><svg width="12" height="6"><path d="M0 0H12L6 6Z" fill="#444" /></svg></button>
          <button class="jump first" aria-label="Предыдущая страница"><svg width="8" height="8"><path d="M1 4H7L4 0ZM1 8H7L4 4Z" fill="#2f6fe8" /></svg></button>
          <button class="jump" aria-label="Объект перехода"><svg width="8" height="8"><circle cx="4" cy="4" r="3" fill="#ddd" stroke="#777" /></svg></button>
          <button class="jump" aria-label="Следующая страница"><svg width="8" height="8"><path d="M1 0H7L4 4ZM1 4H7L4 8Z" fill="#2f6fe8" /></svg></button>
        </div>
      </main>

      <footer class="status">
        <span class="cell pages">Страница: 6 из 6</span>
        <span class="cell words">Число слов: 737</span>
        <span class="cell lang">казахский</span>
        <div class="views">
          <button class="on" aria-label="Разметка страницы">{@render icon("vPrint")}</button>
          <button aria-label="Режим чтения">{@render icon("vRead")}</button>
          <button aria-label="Веб-документ">{@render icon("vWeb")}</button>
          <button aria-label="Структура">{@render icon("vOutline")}</button>
          <button aria-label="Черновик">{@render icon("vDraft")}</button>
        </div>
        <span class="percent">100%</span>
        <button class="round" aria-label="Уменьшить"><svg width="20" height="20"><circle cx="10" cy="10" r="9" /><path d="M6 10H14" /></svg></button>
        <input type="range" min="0" max="100" bind:value={zoom} aria-label="Масштаб" />
        <button class="round" aria-label="Увеличить"><svg width="20" height="20"><circle cx="10" cy="10" r="9" /><path d="M5 10H15M10 5V15" /></svg></button>
      </footer>
    </div>
  </div>

  <div class="taskbar">
    <button class="weather">
      {@render icon("weather")}
      <span>25°C<br /><em>Mostly cloudy</em></span>
    </button>
    <div class="middle">
      <button class="start" aria-label="Пуск">{@render icon("start")}</button>
      <label class="search">
        {@render icon("searchBig")}
        <input type="text" bind:value={taskQuery} placeholder="Поиск" aria-label="Поиск" />
      </label>
      {#each apps as app}
        <button class="app {app.state ?? ''}" aria-label={app.title}>{@render icon(app.icon)}</button>
      {/each}
    </div>
    <div class="tray">
      <button aria-label="Скрытые значки">{@render icon("up")}</button>
      <button aria-label="OneDrive">{@render icon("cloud")}</button>
      <button aria-label="Микрофон">{@render icon("mic")}</button>
      <button class="layout">ҚАЗ</button>
      <button class="net" aria-label="Сеть и звук">{@render icon("wifi")}{@render icon("sound")}{@render icon("battery")}</button>
      <button class="clock">15:38<br />29.06.2023</button>
      <span class="badge">4</span>
    </div>
  </div>
</div>

<style>
  :global(body) {
    overflow: hidden;
  }

  .desktop {
    height: 100vh;
    display: flex;
    flex-direction: column;
    font-family: "Open Sans", "Noto Sans", sans-serif;
    font-size: 12px;
    line-height: 16px;
    color: #333;
  }

  .desktop :is(button, input, select) {
    font: inherit;
    color: inherit;
    background: none;
    border: 0;
    padding: 0;
    margin: 0;
    outline: 0;
    white-space: nowrap;
  }

  .desktop * {
    box-sizing: border-box;
  }

  svg {
    flex: none;
    display: block;
  }

  h1, h2, p {
    margin: 0;
    font-weight: 400;
  }

  .caret {
    display: inline-block;
    fill: #555;
    vertical-align: middle;
  }

  .screen {
    flex: 1;
    min-height: 0;
    display: flex;
    background: #d6d8dc;
  }

  .behind {
    width: 8px;
    background: linear-gradient(#d6d8dc 43px, #e8e8e8 43px, #e4e4e4 128px, #bbb 128px, #bbb 129px, #e2e2e2 129px);
  }

  .window {
    flex: 1;
    min-width: 0;
    display: flex;
    flex-direction: column;
    background: #fff;
    border: solid #a9a9a9;
    border-width: 1px 0 0 1px;
    border-top-left-radius: 10px;
    overflow: hidden;
  }

  /* title bar */
  .titlebar {
    height: 40px;
    display: flex;
    align-items: center;
    padding-top: 1px;
  }

  .quick {
    width: 971px;
    display: flex;
    align-items: center;
    gap: 10px;
    padding-left: 1px;
  }

  .quick .bar {
    width: 1px;
    height: 18px;
    margin: 0 -1px 0 -6px;
    background: #999;
  }

  .quick .bar:last-of-type {
    margin-left: -2px;
  }

  .quick button {
    min-width: 16px;
    display: flex;
    justify-content: center;
  }

  .desktop .quick .mini {
    min-width: 8px;
    margin: 0 -4px;
  }

  .quick .caret {
    fill: #111;
  }

  h1 {
    font-family: "Noto Sans", sans-serif;
    font-size: 14px;
    line-height: 20px;
    color: #222;
    white-space: nowrap;
  }

  .controls {
    margin-left: auto;
    display: flex;
  }

  .controls button {
    width: 58px;
    height: 30px;
    display: grid;
    place-items: center;
  }

  .desktop .controls button:last-child {
    width: 60px;
    margin-right: -9px;
  }

  .controls svg {
    fill: none;
    stroke: #111;
  }

  /* tabs */
  .tabs {
    height: 30px;
    display: flex;
    border-bottom: 1px solid #b6b9bd;
    position: relative;
  }

  .desktop .file {
    width: 70px;
    height: 30px;
    color: #fff;
    background: linear-gradient(#2f6bc8, #2358b0 50%, #4a8be0);
    border: 1px solid #1f4e9e;
    border-radius: 3px 3px 0 0;
    margin-right: 4px;
  }

  .desktop .tab {
    height: 30px;
    padding: 0 14px;
    color: #444;
  }

  .desktop .tab.active {
    background: #fff;
    border: solid #b6b9bd;
    border-width: 1px 1px 0;
    border-radius: 4px 4px 0 0;
    padding: 0 12px;
  }

  .context {
    margin: -40px 0 0 1px;
    height: 69px;
    width: 166px;
    display: flex;
    flex-direction: column;
    justify-content: space-between;
    border: solid #a8a13a;
    border-width: 0 1px;
    border-image: linear-gradient(#a79b1c, #b8b04a 60%, #fff) 1;
    background: linear-gradient(#ffe600 4px, #e2de6c 4px, #eeea8e 45%, #f7f5c4 60%, #fff);
    text-align: center;
  }

  .context strong {
    margin-top: 16px;
    color: #fff;
    text-shadow: 0 1px 2px #8a8430;
  }

  .context-tabs {
    display: flex;
    justify-content: center;
  }

  .help {
    margin: 0 -5px 0 auto;
    display: flex;
    align-items: center;
    gap: 13px;
  }

  .desktop .question {
    width: 17px;
    height: 17px;
    border-radius: 50%;
    background: #3f79cc;
    color: #fff;
    font-weight: 700;
    line-height: 16px;
  }

  /* ribbon */
  .ribbon {
    height: 105px;
    display: flex;
    background: linear-gradient(#fff, #fbfcfd 50%, #e8ebef);
    border-bottom: 1px solid #868d95;
  }

  .group {
    display: flex;
    flex-direction: column;
    border-right: 1px solid #b9bfc7;
    box-shadow: 1px 0 #fff;
  }

  .clipboard { width: 213px; }
  .font { width: 309px; }
  .para { width: 259px; }
  .styles { flex: 1; }
  .editing { width: 106px; margin-right: 48px; }

  .group > :first-child {
    flex: 1;
    min-height: 0;
  }

  .group-label {
    height: 20px;
    display: flex;
    align-items: center;
    color: #6a7080;
    padding: 0 5px;
  }

  .group-label span {
    flex: 1;
    text-align: center;
    white-space: nowrap;
  }

  .launchable span {
    padding-right: 12px;
  }

  .body {
    display: flex;
  }

  .desktop .big {
    width: 62px;
    display: flex;
    flex-direction: column;
    align-items: center;
    gap: 4px;
    padding-top: 8px;
    line-height: 17px;
  }

  .desktop .big > span {
    padding-top: 5px;
  }

  .stack {
    display: flex;
    flex-direction: column;
    gap: 3px;
    padding: 4px 0 0 4px;
  }

  .stack button {
    height: 24px;
    display: flex;
    align-items: center;
    gap: 5px;
  }

  .stack button:disabled {
    color: #9a9a9a;
  }

  .rows {
    padding: 11px 0 0 6px;
    display: flex;
    flex-direction: column;
    gap: 10px;
  }

  .row {
    display: flex;
    height: 26px;
    align-items: stretch;
  }

  .tool, .main, .drop {
    display: grid;
    place-items: center;
  }

  .tool { width: 27px; }
  .main { width: 26px; }
  .drop { width: 13px; }

  .split {
    display: flex;
  }

  .sep {
    width: 8px;
    background: linear-gradient(transparent, #b9bec6 30%, #b9bec6 70%, transparent) center / 1px 100% no-repeat;
  }

  .desktop .tool.on, .split.on {
    background: linear-gradient(#fbdc83, #fcd669 50%, #feec8c);
    border: 1px solid #c2953a;
    border-radius: 3px;
  }

  .desktop .split.on .drop {
    border-left: 1px solid #c2953a;
  }

  .combo {
    display: flex;
    align-items: center;
    border: 1px solid #cfd2d6;
    background: #fff;
    padding: 0 5px 0 2px;
  }

  .combo select {
    flex: 1;
    min-width: 0;
    appearance: none;
    color: #111;
  }

  .face { width: 102px; margin-right: -1px; font-size: 13px; }
  .size { width: 62px; font-size: 13px; }

  .gallery {
    flex: 1;
    display: grid;
    grid-template-columns: repeat(10, 1fr);
    border: 1px solid #c4c8cd;
    background: #fff;
    margin: 4px 0 6px 6px;
  }

  .desktop .style {
    min-width: 0;
    margin: 1px 0 2px;
    padding: 8px 4px 1px;
    display: flex;
    flex-direction: column;
    align-items: center;
    justify-content: space-between;
    border: 3px solid transparent;
    border-radius: 3px;
  }

  .desktop .style.on {
    border-color: #fad26a;
    outline: 1px solid #c2953a;
    outline-offset: -1px;
  }

  .sample {
    width: 74px;
    height: 28px;
    line-height: 28px;
    overflow: hidden;
    text-align: left;
    color: #000;
    font-family: "Liberation Serif", serif;
    font-size: 18px;
  }

  .name {
    line-height: 20px;
  }

  .times { font-size: 19px; }
  .large { font-size: 27px; font-weight: 700; }
  .bold-italic { font-size: 22px; font-weight: 700; font-style: italic; }
  .semi { font-size: 22px; }
  .sans-bold { font: 600 18px/28px "Open Sans", sans-serif; }
  .faint { font: italic 18px/28px "Open Sans", sans-serif; color: #888; }
  .sans-italic { font: italic 18px/28px "Open Sans", sans-serif; }

  .scroller {
    width: 18px;
    display: grid;
    grid-template-rows: repeat(3, 1fr);
    margin: 4px 0 7px;
  }

  .desktop .scroller button {
    display: grid;
    place-items: center;
    border: 1px solid #c4c8cd;
    margin-left: -1px;
    margin-bottom: -1px;
    background: #fdfdfd;
  }

  .desktop .scroller button:disabled {
    background: #eee;
  }

  .desktop .change {
    width: 68px;
    gap: 2px;
    padding-right: 2px;
  }

  .editing .stack {
    gap: 2px;
    padding: 3px 0 0 10px;
  }

  .editing .stack > button > :global(svg:first-child:not(.caret)) {
    min-width: 16px;
  }

  /* workspace */
  .workspace {
    flex: 1;
    min-height: 0;
    display: flex;
    background: linear-gradient(#cfd2d7, #b8bbc0);
  }

  .nav {
    width: 256px;
    margin-top: 3px;
    padding: 2px 7px 2px;
    border: 1px solid #868d98;
    background: #e9ecf1;
    display: flex;
    flex-direction: column;
  }

  .nav header {
    height: 17px;
    margin: 0 -5px;
    padding: 0 4px 0 2px;
    display: flex;
    align-items: center;
    gap: 9px;
    background: #cdd3db;
  }

  h2 {
    flex: 1;
    font-size: 12px;
    line-height: 17px;
  }

  .find {
    height: 27px;
    margin-top: 7px;
    display: flex;
    align-items: center;
    gap: 11px;
    padding: 0 3px 2px 2px;
    background: #fff;
    border: 1px solid #c9cdd3;
  }

  .find input {
    flex: 1;
    min-width: 0;
  }

  .find input::placeholder {
    color: #6d6d6d;
    opacity: 1;
  }

  .nav-tabs {
    margin-top: 8px;
    display: flex;
    height: 30px;
  }

  .desktop .nav-tabs > button {
    width: 31px;
    margin-right: -1px;
    display: grid;
    place-items: center;
    border: 1px solid #b9bdc4;
  }

  .desktop .nav-tabs > button.on {
    background: #fff;
    border-bottom-color: #fff;
    z-index: 1;
  }

  .nav-steps {
    margin: 0 8px 6px auto;
    display: flex;
    align-items: center;
    gap: 16px;
  }

  .outline {
    flex: 1;
    min-height: 0;
    margin-top: -1px;
    display: flex;
    background: #fff;
    border: 1px solid #b9bdc4;
  }

  .items {
    flex: 1;
    padding: 10px 3px 0;
    display: flex;
    flex-direction: column;
  }

  .desktop .top {
    height: 27px;
    display: grid;
    place-items: center;
    border: 1px solid #d0d2d5;
    border-radius: 4px;
    background: linear-gradient(#fff, #f1f3f5);
  }

  .desktop .heading {
    height: 27px;
    margin: -1px 0 0 40px;
    padding-left: 16px;
    border: 1px solid #c2953a;
    border-radius: 4px;
    background: linear-gradient(#fde27d, #fbcf61 50%, #fff08a);
  }

  .track {
    width: 21px;
    display: flex;
    flex-direction: column;
    justify-content: space-between;
    background: #f6f6f7;
    padding: 0 1px;
  }

  .desktop .track button {
    height: 21px;
    display: grid;
    place-items: center;
    border: 1px solid #b9bdc4;
    border-radius: 2px;
    background: linear-gradient(90deg, #fff, #e9eaec);
  }

  .v-side {
    width: 29px;
    background: #cdd0d5;
    margin-top: 2px;
    overflow: hidden;
  }

  .desktop .corner {
    width: 29px;
    height: 29px;
    display: grid;
    place-items: center;
    border: 1px solid #868d98;
    border-left: 0;
  }

  .corner svg {
    background: #f9f9f9;
    border: 1px solid #868d98;
  }

  .v-ruler {
    margin-left: 5px;
  }

  .v-ruler text, .h-ruler text {
    fill: #555;
    font-size: 13px;
    text-anchor: middle;
  }

  .v-ruler path, .h-ruler path {
    stroke: #555;
    fill: none;
  }

  .stop, .frame {
    fill: #cdd0d5;
    stroke: #868d98;
  }

  .frame {
    fill: none;
  }

  .v-ruler .edge {
    stroke: #868d98;
  }

  .doc {
    flex: 1;
    min-width: 0;
    display: flex;
    flex-direction: column;
    position: relative;
    padding: 8px 105px 24px 104px;
    overflow: hidden;
  }

  .h-ruler {
    height: 23px;
    border-right: 1px solid #868d98;
    clip-path: inset(0 0 -1px 0);
  }

  .indent {
    position: absolute;
    left: 159px;
    top: 3px;
    fill: #eee;
    stroke: #777;
  }

  .indent.end {
    left: 422px;
    top: 14px;
  }

  .page {
    flex: 1;
    min-height: 0;
    padding: 2px 60px 0;
    background: #fff;
    box-shadow: 0 4px 12px #6b7076;
    clip-path: inset(0 -20px -20px -20px);
    border: solid #9aa0a8;
    border-width: 0 1px 1px;
    color: #000;
    font-family: "Liberation Serif", serif;
    font-size: 20px;
    line-height: 23px;
  }

  table {
    table-layout: fixed;
    width: 860px;
    margin-left: -10px;
    border-collapse: collapse;
  }

  .c1 { width: 281px; }
  .c2 { width: 106px; }
  .c3 { width: 130px; }
  .c4 { width: 118px; }

  th, td {
    border: 1px solid #000;
    padding: 0 8px 0 9px;
    text-align: left;
    vertical-align: top;
    font-weight: 400;
  }

  th {
    padding-right: 0;
  }

  .cursor {
    display: inline-block;
    width: 2px;
    height: 22px;
    margin-right: -2px;
    vertical-align: top;
    background: #000;
  }

  .v-scroll {
    width: 20px;
    margin-right: -8px;
    display: flex;
    flex-direction: column;
    align-items: center;
    background: #dce0e9;
  }

  .grip {
    width: 12px;
    height: 2px;
    margin: 4px 0 3px;
    background: #868d98;
  }

  .v-scroll button {
    height: 21px;
    display: grid;
    place-items: center;
  }

  .desktop .v-scroll .rule {
    width: 20px;
    border: 1px solid #868d98;
    background: #f2f3f6;
  }

  .thumb {
    width: 20px;
    height: 88px;
    margin-top: auto;
    display: grid;
    place-items: center;
    border: 1px solid #868d98;
    background: linear-gradient(90deg, #f8f9fb, #d9dde4);
  }

  .desktop .jump.first {
    width: 20px;
    border-top: 1px solid #b4bac6;
  }

  /* status bar */
  .status {
    height: 18px;
    display: flex;
    align-items: flex-start;
    overflow: hidden;
    padding-right: 12px;
    border-top: 2px solid #9299a5;
    background: linear-gradient(#fff 1px, #e3e6eb 1px, #c9cdd4);
  }

  .cell {
    padding: 5px 0 0 9px;
    height: 24px;
    border-right: 1px solid #8f959e;
    box-shadow: 1px 0 #fff;
    white-space: nowrap;
  }

  .pages { width: 116px; padding-left: 8px; }
  .words { width: 116px; }
  .lang { width: 126px; }

  .views {
    margin-left: auto;
    padding-left: 4px;
    display: flex;
    border-left: 1px solid #8f959e;
  }

  .desktop .views button {
    width: 23px;
    height: 24px;
    display: grid;
    justify-items: center;
    align-items: start;
    padding-top: 6px;
  }

  .desktop .views .on {
    background: linear-gradient(#fbd25f, #fde58d);
    border: 1px solid #c2953a;
    border-radius: 3px;
    padding-top: 5px;
  }

  .percent {
    padding: 5px 9px 0 9px;
  }

  .round svg {
    fill: #f8f8f8;
    stroke: #6b7280;
  }

  .desktop .status input {
    width: 125px;
    height: 21px;
    appearance: none;
    background: linear-gradient(#8b919b, #8b919b) center 10px / 100% 1px no-repeat;
  }

  .status input::-webkit-slider-thumb {
    appearance: none;
    width: 11px;
    height: 15px;
    border: 2px solid #7b8390;
    border-radius: 0 0 4px 4px;
    background: #f8f8f8;
  }

  /* taskbar */
  .taskbar {
    height: 60px;
    display: grid;
    grid-template-columns: 1fr auto 1fr;
    align-items: center;
    font-size: 15px;
    line-height: 20px;
    color: #1b1b1b;
    background: linear-gradient(90deg, #f0ddd7, #f2e1d0 4%, #f1e3c4 11%, #f0e2bd 16%, #dfe0d2 20%, #e2e0dc 25%, #f2e0cd 29%, #eadfdc 33%, #e6dee6 40%, #e8e4e2 45%, #efded1 52%, #f0e0cb 61%, #ebe3da 67%, #dddce9 73%, #e3e2e3 78%, #f2e3d1 84%, #e7e4e1 89%, #e8e6e4);
  }

  .desktop .weather {
    justify-self: start;
    display: flex;
    align-items: center;
    gap: 9px;
    padding: 2px 0 0 26px;
    text-align: left;
  }

  em {
    font-style: normal;
    color: #5d594f;
  }

  .middle {
    display: flex;
    align-items: center;
    padding: 1px 0 0 10px;
  }

  .start {
    width: 48px;
    display: grid;
    justify-items: start;
  }

  .search {
    width: 274px;
    height: 38px;
    margin-right: 3px;
    padding: 0 14px;
    display: flex;
    align-items: center;
    gap: 12px;
    background: #faf7f6;
    border: 1px solid #d3cbca;
    border-radius: 19px;
    font-size: 16px;
  }

  .search input {
    flex: 1;
    min-width: 0;
  }

  .search input::placeholder {
    color: #5f5f5f;
    opacity: 1;
  }

  .app {
    width: 55px;
    height: 48px;
    display: grid;
    place-items: center;
    position: relative;
  }

  .app.open::after, .app.active::after {
    content: "";
    position: absolute;
    bottom: 0;
    width: 8px;
    height: 4px;
    border-radius: 2px;
    background: #858585;
  }

  .app.active::before {
    content: "";
    position: absolute;
    inset: 0 6px 0 5px;
    background: #f2f1f4;
    border: 1px solid #dcd8d8;
    border-radius: 5px;
    box-shadow: 5px 0 0 -1px #eae8ec;
  }

  .app.active :global(svg) {
    position: relative;
  }

  .app.active::after {
    width: 20px;
    background: #0b78d4;
  }

  .tray {
    justify-self: end;
    display: flex;
    align-items: center;
    padding-right: 24px;
    font-size: 14px;
  }

  .desktop .tray button:not(.clock) {
    display: flex;
    margin-right: 14px;
  }

  .desktop .tray .layout:not(.clock) {
    margin: 0 23px 0 12px;
  }

  .desktop .tray .net:not(.clock) {
    gap: 10px;
    margin-right: 20px;
    align-items: center;
  }

  .desktop .clock {
    text-align: right;
  }

  .badge {
    width: 20px;
    height: 20px;
    margin-left: 10px;
    border-radius: 50%;
    background: #0b78d4;
    color: #fff;
    font-size: 12px;
    text-align: center;
  }
</style>
